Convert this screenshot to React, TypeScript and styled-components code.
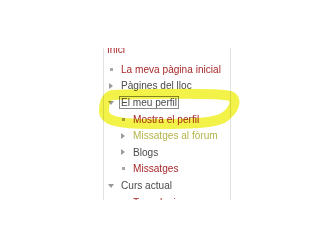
import { FC } from 'react';
import styled, { createGlobalStyle } from 'styled-components';

// ========== 型定義 ==========

type Icon = 'none' | 'leaf' | 'closed' | 'open';
type Tone = 'link' | 'text' | 'dim';

type NavItem = {
  label: string;
  level: number;
  icon: Icon;
  tone: Tone;
  focused?: boolean;
};

const items: NavItem[] = [
  { label: 'Inici', level: 0, icon: 'none', tone: 'link' },
  { label: 'La meva pàgina inicial', level: 1, icon: 'leaf', tone: 'link' },
  { label: 'Pàgines del lloc', level: 1, icon: 'closed', tone: 'text' },
  { label: 'El meu perfil', level: 1, icon: 'open', tone: 'text', focused: true },
  { label: 'Mostra el perfil', level: 2, icon: 'leaf', tone: 'link' },
  { label: 'Missatges al fòrum', level: 2, icon: 'closed', tone: 'dim' },
  { label: 'Blogs', level: 2, icon: 'closed', tone: 'text' },
  { label: 'Missatges', level: 2, icon: 'leaf', tone: 'link' },
  { label: 'Curs actual', level: 1, icon: 'open', tone: 'text' },
  { label: 'Tecnologia', level: 2, icon: 'open', tone: 'link' },
];

const toneColor: Record<Tone, string> = {
  link: '#a8282a',
  text: '#4a4a4a',
  dim: '#b4b44c',
};

// ========== コンポーネント ==========

const NodeIcon: FC<{ icon: Icon }> = ({ icon }) => {
  if (icon === 'leaf') return <Bullet />;
  if (icon === 'closed') return <TriRight />;
  if (icon === 'open') return <TriDown />;
  return null;
};

const App: FC = () => (
  <>
    <GlobalStyle />
    <Page>
      <Panel>
        <NavList>
          {items.map((it) => (
            <Row key={it.label} $level={it.level}>
              {it.level > 0 && (
                <IconBox>
                  <NodeIcon icon={it.icon} />
                </IconBox>
              )}
              <Label $tone={it.tone} $focused={it.focused} $root={it.level === 0}>
                {it.label}
              </Label>
            </Row>
          ))}
        </NavList>
      </Panel>
      <Highlight width="320" height="240" viewBox="0 0 320 240">
        <path
          d="M 112 95 C 150 94, 215 92, 230 96 C 238 99, 235 110, 223 118 C 212 124, 180 124, 150 124 C 120 124, 104 121, 104 111 C 104 102, 106 97, 112 95 Z"
          fill="none"
          stroke="#f2f248"
          strokeWidth="10"
          strokeLinecap="round"
          strokeLinejoin="round"
        />
      </Highlight>
    </Page>
  </>
);

export default App;

// ========== スタイル ==========

const GlobalStyle = createGlobalStyle`
  html, body {
    margin: 0;
    padding: 0;
    background: #fff;
  }
  body {
    font-family: "Liberation Sans", Arial, sans-serif;
  }
`;

const Page = styled.div`
  position: relative;
  width: 320px;
  height: 240px;
  padding: 48px 0 0 103px;
  box-sizing: border-box;
`;

const Panel = styled.div`
  width: 128px;
  height: 152px;
  box-sizing: border-box;
  overflow: hidden;
  border-left: 1px solid #e2e2e2;
  border-right: 1px solid #e2e2e2;
  background: #fff;
`;

const NavList = styled.ul`
  list-style: none;
  margin: -3.5px 0 0 0;
  padding: 0;
`;

const Row = styled.li<{ $level: number }>`
  display: flex;
  align-items: center;
  height: 16.6px;
  padding-left: ${(p) => (p.$level === 0 ? 2 : 1 + (p.$level - 1) * 12)}px;
  font-size: 10.1px;
  white-space: nowrap;
`;

const IconBox = styled.span`
  display: flex;
  align-items: center;
  justify-content: center;
  width: 12px;
  height: 12px;
  margin-right: 3px;
  flex: none;
`;

const Bullet = styled.span`
  width: 3px;
  height: 3px;
  background: #a8a8a8;
`;

const TriRight = styled.span`
  width: 0;
  height: 0;
  border-top: 3.5px solid transparent;
  border-bottom: 3.5px solid transparent;
  border-left: 4px solid #9a9a9a;
`;

const TriDown = styled.span`
  width: 0;
  height: 0;
  border-left: 3.5px solid transparent;
  border-right: 3.5px solid transparent;
  border-top: 4px solid #9a9a9a;
`;

const Label = styled.span<{ $tone: Tone; $focused?: boolean; $root?: boolean }>`
  color: ${(p) => toneColor[p.$tone]};
  line-height: 11px;
  padding: 0 1px;
  margin-bottom: ${(p) => (p.$root ? 6 : 0)}px;
  outline: ${(p) => (p.$focused ? '1px solid #8a8a8a' : 'none')};
`;

const Highlight = styled.svg`
  position: absolute;
  left: 0;
  top: 0;
  pointer-events: none;
  mix-blend-mode: multiply;
`;
